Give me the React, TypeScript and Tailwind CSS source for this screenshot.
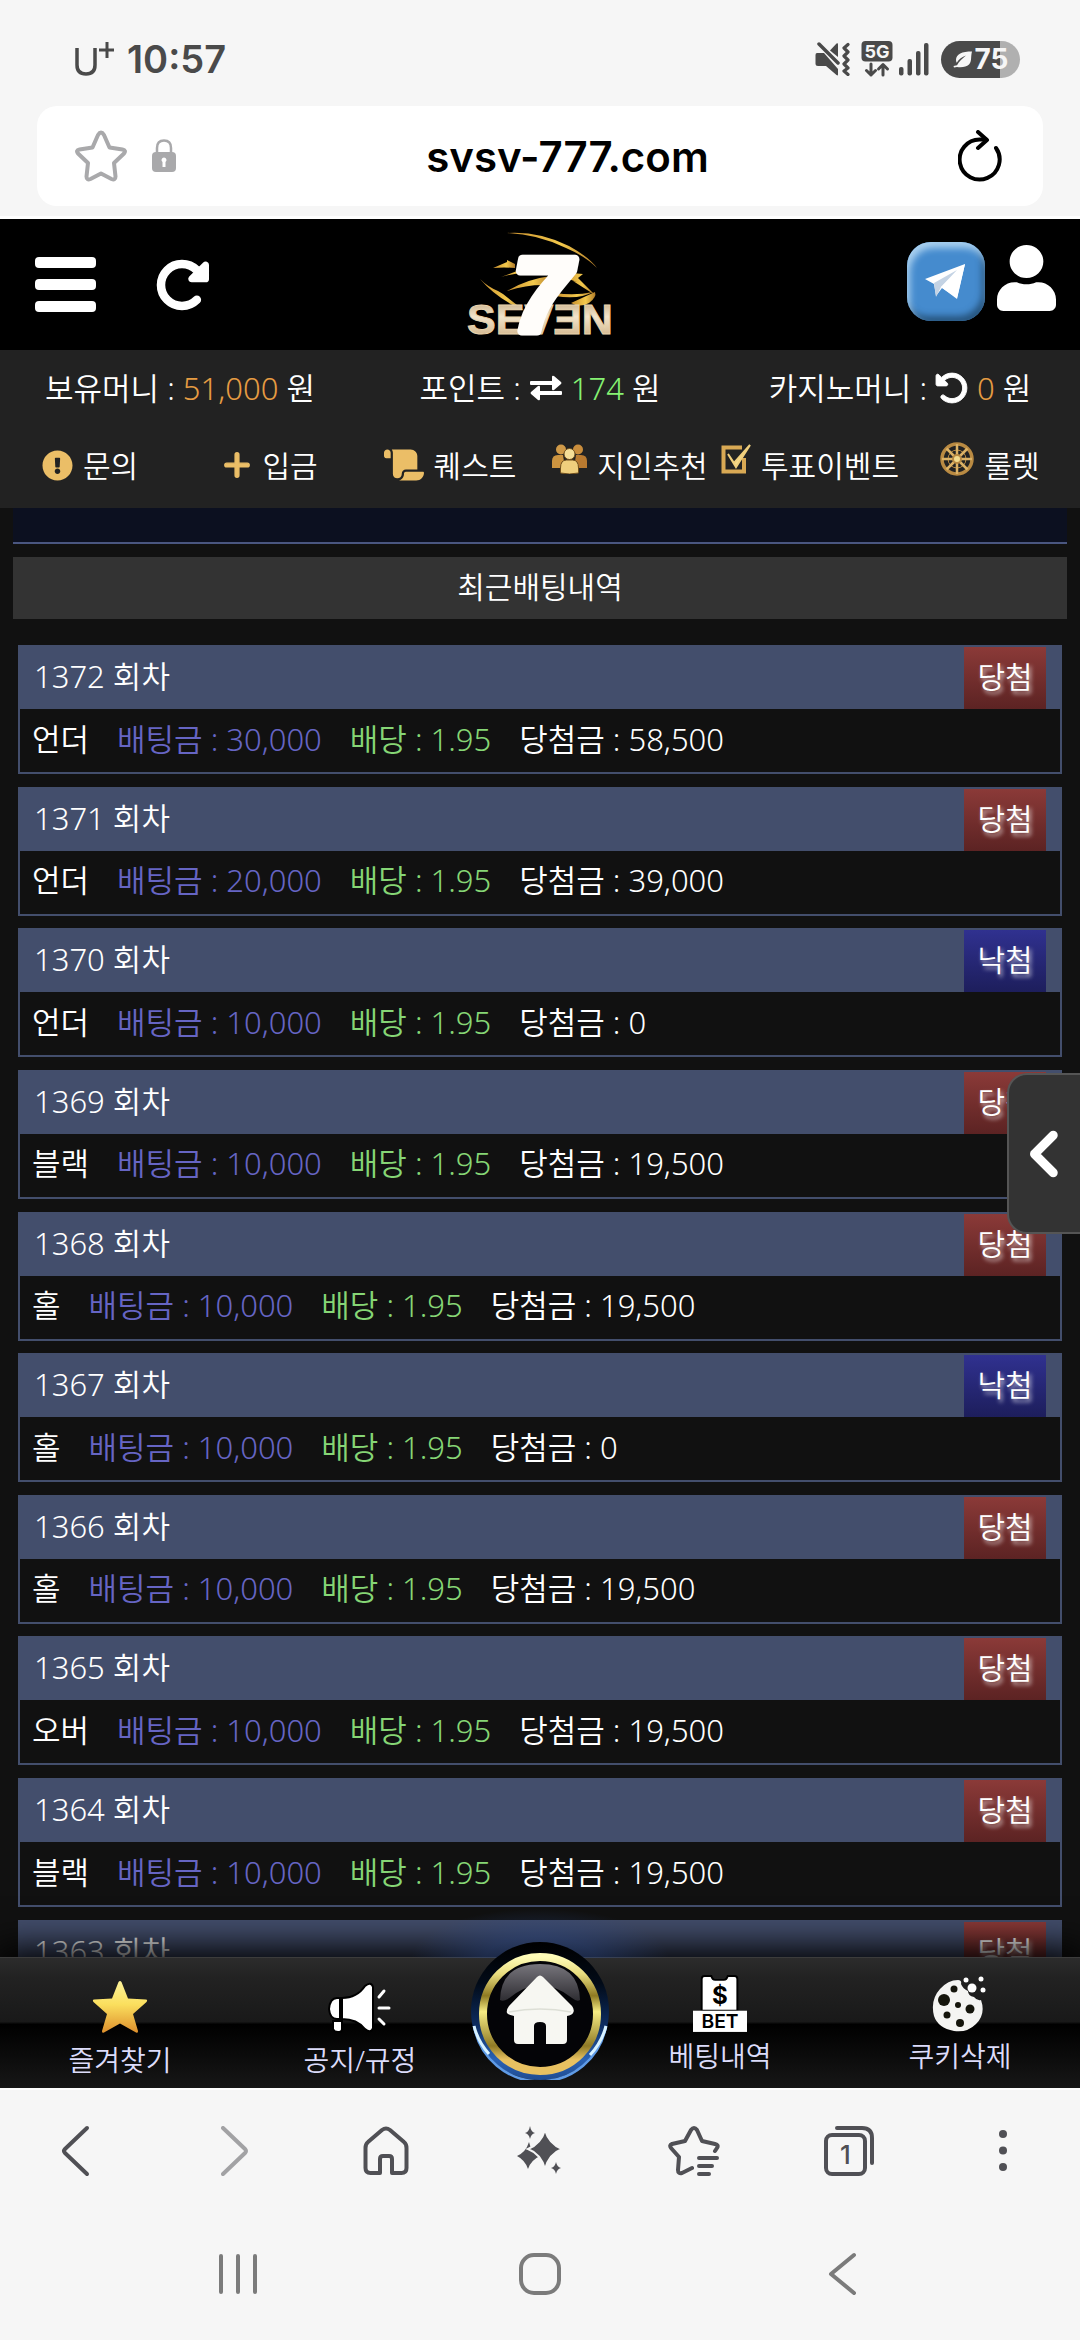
import type { ReactNode } from 'react';
import { FaChevronLeft, FaPlus, FaRotateLeft, FaRotateRight, FaScroll } from 'react-icons/fa6';
import { FaExclamationCircle, FaUser } from 'react-icons/fa';

interface BetRecord {
  round: number;
  pick: string;
  stake: string;
  odds: string;
  payout: string;
  won: boolean;
}

const BETS: BetRecord[] = [
  { round: 1372, pick: '언더', stake: '30,000', odds: '1.95', payout: '58,500', won: true },
  { round: 1371, pick: '언더', stake: '20,000', odds: '1.95', payout: '39,000', won: true },
  { round: 1370, pick: '언더', stake: '10,000', odds: '1.95', payout: '0', won: false },
  { round: 1369, pick: '블랙', stake: '10,000', odds: '1.95', payout: '19,500', won: true },
  { round: 1368, pick: '홀', stake: '10,000', odds: '1.95', payout: '19,500', won: true },
  { round: 1367, pick: '홀', stake: '10,000', odds: '1.95', payout: '0', won: false },
  { round: 1366, pick: '홀', stake: '10,000', odds: '1.95', payout: '19,500', won: true },
  { round: 1365, pick: '오버', stake: '10,000', odds: '1.95', payout: '19,500', won: true },
  { round: 1364, pick: '블랙', stake: '10,000', odds: '1.95', payout: '19,500', won: true },
  { round: 1363, pick: '홀', stake: '10,000', odds: '1.95', payout: '19,500', won: true },
];

/* ---------- Status bar ---------- */

function MuteVibrateIcon() {
  return (
    <svg width="36" height="34" viewBox="0 0 36 34" fill="#4a4a4a">
      <path d="M2 11h7L23 27v5.500q0 1.500-1.500.5L11 24H3q-2.500 0-2.500-2.500V13q0-2 1.500-2z" />
      <path d="M15 8.500 21.500 1.500q1.500-1 1.500.8V15z" />
      <path d="M4 2l19 19" stroke="#4a4a4a" strokeWidth="3.500" strokeLinecap="round" />
      <path
        d="M33 2.500 29 6l4 4-4 4 4 4-4 4 4 4-4 3 4 3.500"
        fill="none"
        stroke="#4a4a4a"
        strokeWidth="3.200"
        strokeLinecap="round"
        strokeLinejoin="round"
      />
    </svg>
  );
}

function NetworkIcon() {
  return (
    <svg width="32" height="36" viewBox="0 0 32 36">
      <rect x="0.500" y="0" width="31" height="20.500" rx="4" fill="#4a4a4a" />
      <text
        x="16"
        y="16.500"
        textAnchor="middle"
        fontFamily="Inter, sans-serif"
        fontSize="18"
        fontWeight="700"
        fill="#f6f6f6"
      >
        5G
      </text>
      <g fill="none" stroke="#4a4a4a" strokeWidth="3" strokeLinecap="round" strokeLinejoin="round">
        <path d="M10 23v11M5.500 29.500 10 34l4.500-4.500" />
        <path d="M22 34V23.500M17.500 28l4.500-4.500 4.500 4.500" />
      </g>
    </svg>
  );
}

function SignalIcon() {
  return (
    <svg width="30" height="34" viewBox="0 0 30 34" fill="#4a4a4a">
      <rect x="0" y="25" width="4.500" height="8.500" rx="2" />
      <rect x="8.500" y="17" width="4.500" height="16.500" rx="2" />
      <rect x="17" y="9" width="4.500" height="24.500" rx="2" />
      <rect x="25" y="1" width="4.500" height="32.500" rx="2" />
    </svg>
  );
}

function LeafIcon() {
  return (
    <svg width="20" height="17" viewBox="0 0 20 17" fill="#f6f6f6">
      <path d="M19 .5C9 .5 3 3 3 9q0 1.500.7 2.800C6 8 9 6 13 4.500 9.500 7.500 6 10.500 4 14.200L.5 15l.5 1.500 3-.5q8 1 12-2.500C19 10.500 17.500 6 19 .5z" />
    </svg>
  );
}

function StatusBar() {
  return (
    <div className="flex h-[106px] items-center justify-between pt-3 pr-[60px] pl-[75px] text-[#4a4a4a]">
      <div className="flex items-center gap-3 font-['Inter',sans-serif] leading-none">
        <svg width="40" height="36" viewBox="0 0 40 36" fill="none" stroke="#4a4a4a">
          <path d="M2 7v17q0 9 9 9t9-9V7" strokeWidth="3.500" />
          <path d="M32 1v16M24 9h15" strokeWidth="3" />
        </svg>
        <span className="text-[38px] font-semibold">10:57</span>
      </div>
      <div className="flex items-center gap-2.5">
        <MuteVibrateIcon />
        <NetworkIcon />
        <div className="mr-0.5 -ml-1">
          <SignalIcon />
        </div>
        <div className="flex h-[37px] w-[79px] items-center justify-center gap-0.5 rounded-full bg-[linear-gradient(90deg,#4a4a4a_75%,#b0b0b0_75%)] font-['Inter',sans-serif] text-[28px] leading-none font-bold text-[#f6f6f6]">
          <LeafIcon />
          75
        </div>
      </div>
    </div>
  );
}

function AddressBar() {
  return (
    <div className="mx-[37px] flex h-[100px] items-center rounded-[20px] bg-white pr-[41px] pl-[38px]">
      <button type="button" aria-label="북마크">
        <svg width="52" height="52" viewBox="0 0 52 52" fill="none" stroke="#a9a9ab" strokeWidth="4">
          <path
            d="M23 5q3-5 6 0l5.500 12.500 13 2q4 .8 1.500 4L39 33l1.500 13.500q0 4-4 2.500L26 43.500 15.500 49q-4 1.500-4-2.500L13 33 3 23.500q-2.500-3.200 1.500-4l13-2z"
            strokeLinejoin="round"
          />
        </svg>
      </button>
      <svg className="ml-6" width="26" height="34" viewBox="0 0 26 34">
        <path d="M6 16V9q0-7.500 7-7.500T20 9v7" fill="none" stroke="#a9a9ab" strokeWidth="2.500" />
        <rect x="1" y="13" width="24" height="20" rx="4" fill="#a9a9ab" />
        <path d="M13 18.500a2.500 2.500 0 0 1 1.500 4.500v5h-3v-5a2.500 2.500 0 0 1 1.500-4.500z" fill="#fff" />
      </svg>
      <input
        type="text"
        aria-label="주소"
        defaultValue="svsv-777.com"
        className="h-[60px] min-w-0 flex-1 bg-transparent text-center font-['Inter',sans-serif] text-[42px] font-semibold text-black outline-none"
      />
      <button type="button" aria-label="새로고침">
        <svg
          width="44"
          height="52"
          viewBox="0 0 44 52"
          fill="none"
          stroke="#000"
          strokeWidth="4"
          strokeLinecap="round"
          strokeLinejoin="round"
        >
          <path d="M38 18A20 20 0 1 1 22 9.500h6" />
          <path d="M20 2l9 8-9 8" />
        </svg>
      </button>
    </div>
  );
}

/* ---------- Site header ---------- */

function Logo() {
  return (
    <svg width="146" height="108" viewBox="0 0 146 108" role="img" aria-label="SEVEN">
      <defs>
        <linearGradient id="gold" x1="0" y1="0" x2="1" y2="0">
          <stop offset="0" stopColor="#c98f2e" />
          <stop offset="0.600" stopColor="#f3c94c" />
          <stop offset="1" stopColor="#b07a28" />
        </linearGradient>
        <linearGradient id="letters" x1="0" y1="0" x2="0" y2="1">
          <stop offset="0" stopColor="#b99a6c" />
          <stop offset="0.450" stopColor="#f2e4cc" />
          <stop offset="1" stopColor="#c9a878" />
        </linearGradient>
      </defs>
      <g fill="url(#gold)">
        <path d="M40 2q32-2 62 13 20 11 28 22-12-12-31-20Q70 3 40 2z" />
        <path d="M13 48q8 8 18 12l5 3q10 8 22 17Q30 68 13 48z" />
        <path d="M26 37l14-6v-2l8 4v4q-11-1-22 0z" />
        <path d="M34 46l16-6 12 1q-14 1-28 5z" />
        <path d="M40 60q20-12 44-15l-8 9q-18 0-36 6z" />
        <path d="M100 37l8-3-4 8 12 1-5 4 17 17-22-14 4 1-14-5z" />
        <path d="M104 72l24-11q2 5-6 11-9 5-18 0z" />
        <path d="M88 62q20 3 38-1-14 8-38 4z" />
      </g>
      <text
        x="73"
        y="103"
        textAnchor="middle"
        fontFamily="'Liberation Sans', Arial, sans-serif"
        fontSize="43"
        fontWeight="700"
        fill="url(#letters)"
        stroke="#e9d3ac"
        strokeWidth="1"
      >
        SEVƎN
      </text>
      <text
        x="75"
        y="100"
        textAnchor="middle"
        fontFamily="'Liberation Sans', Arial, sans-serif"
        fontSize="104"
        fontStyle="italic"
        fontWeight="700"
        fill="#fffdfa"
        stroke="#fffdfa"
        strokeWidth="9"
        strokeLinejoin="round"
      >
        7
      </text>
    </svg>
  );
}

function TelegramIcon() {
  return (
    <span className="flex h-[79px] w-[78px] items-center justify-center rounded-[24px] bg-[#458bce] shadow-[inset_3px_6px_7px_#a9d0ef,inset_-3px_-5px_6px_#27557f]">
      <svg width="46" height="40" viewBox="0 0 46 40">
        <path d="M2 17 42 2 34 36 19 26 13 34 11 22z" fill="#fff" />
        <path d="M11 21 34 8 18 25 13 35z" fill="#c4d3e4" />
        <path d="M42 2 18 25l16 12z" fill="#fff" />
      </svg>
    </span>
  );
}

function SiteHeader() {
  return (
    <header className="grid h-[131px] grid-cols-3 items-center bg-black px-6 text-white">
      <div className="flex items-center gap-[58px] pl-[11px]">
        <button type="button" aria-label="메뉴" className="flex flex-col gap-[11px]">
          <span className="h-[11px] w-[61px] rounded-sm bg-white" />
          <span className="h-[11px] w-[61px] rounded-sm bg-white" />
          <span className="h-[11px] w-[61px] rounded-sm bg-white" />
        </button>
        <button type="button" aria-label="다시 불러오기">
          <FaRotateRight size={56} strokeWidth={14} className="overflow-visible" />
        </button>
      </div>
      <a href="#home" className="justify-self-center">
        <Logo />
      </a>
      <div className="flex items-center justify-end gap-3 pb-1.5">
        <a href="#telegram" aria-label="텔레그램">
          <TelegramIcon />
        </a>
        <a href="#me" aria-label="내 정보" className="pb-2">
          <FaUser className="h-[66px] w-[59px]" preserveAspectRatio="none" />
        </a>
      </div>
    </header>
  );
}

/* ---------- Balances and quick menu ---------- */

function SwapIcon() {
  return (
    <svg width="34" height="26" viewBox="0 0 34 26" fill="#fff">
      <path d="M2 6h21V2q0-2 2-1l7 6q1 1 0 2l-7 6q-2 1-2-1v-4H2q-1 0-1-1V7q0-1 1-1z" />
      <path d="M32 20H11v4q0 2-2 1l-7-6q-1-1 0-2l7-6q2-1 2 1v4h21q1 0 1 1v2q0 1-1 1z" />
    </svg>
  );
}

function Balances() {
  return (
    <div className="grid h-[78px] grid-cols-3 items-center pb-0.5 text-[31px] whitespace-nowrap">
      <div className="text-center">
        보유머니 : <span className="text-[#e69c42]">51,000</span> 원
      </div>
      <div className="flex items-center justify-center gap-2">
        포인트 :
        <button type="button" aria-label="포인트 전환">
          <SwapIcon />
        </button>
        <span>
          <span className="text-[#86f273]">174</span> 원
        </span>
      </div>
      <div className="flex items-center justify-center gap-2">
        카지노머니 :
        <button type="button" aria-label="카지노머니 회수">
          <FaRotateLeft size={34} strokeWidth={14} className="overflow-visible" />
        </button>
        <span>
          <span className="text-[#e69c42]">0</span> 원
        </span>
      </div>
    </div>
  );
}

function GoldDefs() {
  return (
    <defs>
      <linearGradient id="brass" x1="0" y1="0" x2="1" y2="1">
        <stop offset="0" stopColor="#b67a2c" />
        <stop offset="0.450" stopColor="#f8e69a" />
        <stop offset="1" stopColor="#b27126" />
      </linearGradient>
    </defs>
  );
}

function PeopleIcon() {
  return (
    <svg width="35" height="30" viewBox="0 0 35 30" fill="url(#brass)">
      <GoldDefs />
      <circle cx="9" cy="5.500" r="5" fill="#d09a48" />
      <circle cx="26" cy="5.500" r="5" fill="#c98d3c" />
      <path d="M0 24V17q0-6 6-6h5l2 13z" fill="#cc9440" />
      <path d="M35 24V17q0-6-6-6h-5l-2 13z" fill="#b97a30" />
      <circle cx="17.500" cy="10" r="5.500" fill="#f6df98" stroke="#6e4d1c" />
      <path d="M8.500 29v-5q0-8 6-8h6q6 0 6 8v5q-9 2-18 0z" fill="#f0cf7d" stroke="#6e4d1c" />
    </svg>
  );
}

function VoteIcon() {
  return (
    <svg width="30" height="31" viewBox="0 0 30 31" fill="none">
      <path d="M21 3.500H2.500v24H23V14" stroke="#d9a954" strokeWidth="4" />
      <path d="M7 10l6 9 16-18-14 22z" fill="#f5dc8e" stroke="#f0cf7d" strokeWidth="2" />
    </svg>
  );
}

function RouletteIcon() {
  return (
    <svg width="34" height="34" viewBox="0 0 34 34" fill="none" stroke="#b98a42">
      <circle cx="17" cy="17" r="15" strokeWidth="3.500" />
      <circle cx="17" cy="17" r="9" strokeWidth="1" />
      <path d="M17 2v30M2 17h30M6.500 6.500l21 21M27.500 6.500l-21 21" stroke="#dcb266" strokeWidth="2.500" />
      <circle cx="17" cy="17" r="4" fill="#f3dc8f" strokeWidth="2" />
    </svg>
  );
}

interface QuickItemProps {
  icon: ReactNode;
  label: string;
}

function QuickItem({ icon, label }: QuickItemProps) {
  return (
    <button type="button" className="flex items-center justify-center gap-2.5 whitespace-nowrap">
      {icon}
      {label}
    </button>
  );
}

function QuickMenu() {
  return (
    <nav className="grid h-[80px] grid-cols-6 items-center pb-1.5 text-[30px]">
      <QuickItem icon={<FaExclamationCircle size={31} className="text-[#ebbe67]" />} label="문의" />
      <QuickItem icon={<FaPlus size={30} strokeWidth={24} className="text-[#ebbe67]" />} label="입금" />
      <QuickItem icon={<FaScroll className="h-[36px] w-[40px] text-[#ebbe67]" />} label="퀘스트" />
      <QuickItem icon={<span className="mb-3"><PeopleIcon /></span>} label="지인추천" />
      <QuickItem icon={<span className="mb-3"><VoteIcon /></span>} label="투표이벤트" />
      <QuickItem icon={<span className="mb-3"><RouletteIcon /></span>} label="룰렛" />
    </nav>
  );
}

/* ---------- Betting history ---------- */

function BetCard({ bet }: { bet: BetRecord }) {
  return (
    <article className="mx-[5px] mb-[1.2%] border-2 border-[#434e6c]">
      <div className="flex h-[62px] items-center justify-between bg-[#434e6c] px-3.5">
        <h3 className="pb-1">{bet.round} 회차</h3>
        <span
          className={`flex h-full w-[82px] items-center justify-center pb-0.5 text-[30px] [text-shadow:2px_3px_4px_rgba(255,255,255,0.7)] ${
            bet.won
              ? 'bg-linear-to-b from-[#8b3a38] to-[#5c2323]'
              : 'bg-linear-to-b from-[#303190] to-[#1d1e5c]'
          }`}
        >
          {bet.won ? '당첨' : '낙첨'}
        </span>
      </div>
      <p className="flex h-[63px] items-center gap-7 pb-1 pl-3">
        <span>{bet.pick}</span>
        <span className="text-[#6665c4]">배팅금 : {bet.stake}</span>
        <span className="text-[#86d675]">배당 : {bet.odds}</span>
        <span>당첨금 : {bet.payout}</span>
      </p>
    </article>
  );
}

function History() {
  return (
    <main className="min-h-0 flex-1 overflow-hidden bg-[#111] px-[13px]">
      <div className="h-9 border-b-2 border-[#4a5680] bg-[#0c1020]" />
      <h2 className="mt-[13px] mb-[26px] flex h-[62px] items-center justify-center bg-[#333] pb-1 text-[30px]">
        최근배팅내역
      </h2>
      <section className="text-[31px] leading-10">
        {BETS.map((bet) => (
          <BetCard key={bet.round} bet={bet} />
        ))}
      </section>
    </main>
  );
}

/* ---------- Site bottom navigation ---------- */

function GoldStar() {
  return (
    <svg width="56" height="54" viewBox="0 0 56 54">
      <defs>
        <linearGradient id="star" x1="0" y1="0" x2="0" y2="1">
          <stop offset="0" stopColor="#fdf39a" />
          <stop offset="0.450" stopColor="#fbdf5e" />
          <stop offset="1" stopColor="#dd8f2c" />
        </linearGradient>
      </defs>
      <path
        d="M26.500 2q1.500-2 3 0L36 18.500l18 1q2 .5.500 2.500L41 34l5 17q.3 2.500-2 1.500L28 43.500l-16 9q-2.300 1-2-1.500l5-17L1.500 22Q0 20 2 19.500l18-1z"
        fill="url(#star)"
      />
    </svg>
  );
}

function MegaphoneIcon() {
  return (
    <svg width="64" height="52" viewBox="0 0 64 52" fill="#fff" stroke="#000" strokeWidth="2">
      <path d="M12 16v21H9q-7 0-8-10 1-11 8-11z" />
      <path d="M14 16q15 0 23-12 6-5 8 1v41q-2 6-8 1-8-10-23-10z" />
      <path d="M5 39h9v8q0 3-4 3t-5-3z" />
      <g fill="none" stroke="#fff" strokeWidth="3" strokeLinecap="round">
        <path d="M51 15l5-6M51 26h10M51 37l5 5" />
      </g>
    </svg>
  );
}

function BetSlipIcon() {
  return (
    <svg width="54" height="58" viewBox="0 0 56 60">
      <path d="M12 2h7q1 4 4 4h9q3 0 4-4h7q3 0 3 3v33H9V5q0-3 3-3z" fill="#fff" stroke="#000" strokeWidth="2" />
      <rect x="0" y="38" width="56" height="22" fill="#fff" />
      <g fontFamily="Inter, sans-serif" fontWeight="700" textAnchor="middle" fill="#000">
        <text x="28" y="31" fontSize="25">$</text>
        <text x="28" y="56" fontSize="20" fontWeight="600">BET</text>
      </g>
    </svg>
  );
}

function CookieIcon() {
  return (
    <svg width="56" height="56" viewBox="0 0 56 56">
      <path
        d="M26 4q4 0 3 4 2 5 7 7 0 5 6 6 3 4 7 3 5 14-5 24-9 9-22 7Q6 52 2 40-2 24 8 13q8-9 18-9z"
        fill="#f4f4f2"
      />
      <g fill="#15150c">
        <circle cx="12" cy="24" r="6" />
        <circle cx="22" cy="13" r="3.500" />
        <circle cx="38" cy="33" r="4.500" />
        <circle cx="26" cy="29" r="3" />
        <circle cx="15" cy="39" r="3.500" />
        <circle cx="28" cy="47" r="4" />
      </g>
      <g fill="#fff">
        <circle cx="40" cy="12" r="4.500" />
        <circle cx="34" cy="4" r="2.500" />
        <circle cx="49" cy="3" r="2.500" />
        <circle cx="51" cy="14" r="2.500" />
      </g>
    </svg>
  );
}

function HomeBadge() {
  return (
    <svg className="shrink-0" width="138" height="138" viewBox="0 0 138 138">
      <defs>
        <linearGradient id="rim" x1="0" y1="0" x2="0" y2="1">
          <stop offset="0" stopColor="#000" />
          <stop offset="0.300" stopColor="#020b18" />
          <stop offset="0.600" stopColor="#0c2c60" />
          <stop offset="0.850" stopColor="#2a62b4" />
          <stop offset="1" stopColor="#1f4c92" />
        </linearGradient>
        <linearGradient id="ring" x1="0" y1="0" x2="0" y2="1">
          <stop offset="0" stopColor="#fffcb8" />
          <stop offset="0.150" stopColor="#e9dd7e" />
          <stop offset="0.340" stopColor="#8f7a22" />
          <stop offset="0.480" stopColor="#f6ec83" />
          <stop offset="0.780" stopColor="#8f7a26" />
          <stop offset="0.900" stopColor="#e8c161" />
          <stop offset="1" stopColor="#e8c161" />
        </linearGradient>
        <linearGradient id="gloss" x1="0" y1="0" x2="0" y2="1">
          <stop offset="0" stopColor="#77757c" />
          <stop offset="1" stopColor="#2e2d32" />
        </linearGradient>
      </defs>
      <circle cx="69" cy="69" r="69" fill="url(#rim)" />
      <path d="M3 84a67 67 0 0 0 132 0" fill="none" stroke="#5f9be6" strokeWidth="2.500" />
      <path d="M3 84a67 67 0 0 0 15 28M135 84a67 67 0 0 1-16 29" fill="none" stroke="#d8f2ff" strokeWidth="3" />
      <circle cx="69" cy="72" r="57" fill="#040407" stroke="url(#ring)" strokeWidth="8" />
      <path d="M29 58Q30 22 69 22t40 36q-3 2-8-2Q69 30 37 57q-5 3-8 1z" fill="url(#gloss)" />
      <path
        d="M66 35q3-3 6 0l29 29q3 4 1 7-1 2-6 3v24q0 4-4 4H75V84q0-4-6-4t-6 4v18H47q-4 0-4-4V74q-6-1-7-3-1-3 2-7z"
        fill="#f7f7f2"
      />
      <path d="M38 70q31-6 62 0" fill="none" stroke="#dddfd6" strokeWidth="1.500" />
    </svg>
  );
}

interface NavItemProps {
  icon: ReactNode;
  label: string;
  raised?: boolean;
}

function NavItem({ icon, label, raised }: NavItemProps) {
  return (
    <a
      href="#menu"
      className={`flex h-full flex-col items-center justify-end text-[28px] leading-8 whitespace-nowrap text-[#dcdcfa] ${
        raised ? 'gap-2 pb-4' : 'gap-2.5 pb-3'
      }`}
    >
      {icon}
      {label}
    </a>
  );
}

function SiteNav() {
  return (
    <nav className="relative grid h-[131px] grid-cols-[minmax(0,2fr)_minmax(0,2fr)_minmax(0,1fr)_minmax(0,2fr)_minmax(0,2fr)] border-t border-[#3c3c3c] bg-[linear-gradient(180deg,#2c2c2c_0%,#222_15%,#191919_49%,#000_51%,#171717_100%)] shadow-[0_-4px_34px_6px_#000]">
      {/* blue glow that rises above the bar behind the home badge */}
      <div className="pointer-events-none absolute bottom-full left-1/2 h-[50px] w-[260px] -translate-x-1/2 bg-[radial-gradient(ellipse_at_bottom,#2b4888_30%,transparent_70%)] opacity-40" />
      <NavItem icon={<GoldStar />} label="즐겨찾기" />
      <NavItem icon={<MegaphoneIcon />} label="공지/규정" />
      <a href="#home" aria-label="홈" className="relative -mt-4 flex items-start justify-center">
        <HomeBadge />
      </a>
      <NavItem icon={<BetSlipIcon />} label="베팅내역" raised />
      <NavItem icon={<CookieIcon />} label="쿠키삭제" raised />
    </nav>
  );
}

/* ---------- Browser toolbar and system keys ---------- */

function BrowserToolbar() {
  return (
    <div className="relative grid h-[123px] grid-cols-7 place-items-center border-t-2 border-white bg-[#f6f6f6] [&_svg]:h-[52px] [&_svg]:w-[52px] [&_svg]:fill-none [&_svg]:stroke-[#505055] [&_svg]:stroke-[4px]">
      <button type="button" aria-label="뒤로">
        <svg viewBox="0 0 52 52" strokeLinecap="round" strokeLinejoin="round">
          <path d="M36 3 14 24q-2 2 0 4l22 21" />
        </svg>
      </button>
      <button type="button" aria-label="앞으로" className="opacity-50">
        <svg viewBox="0 0 52 52" strokeLinecap="round" strokeLinejoin="round">
          <path d="M18 3l22 21q2 2 0 4L18 49" />
        </svg>
      </button>
      <button type="button" aria-label="홈 화면">
        <svg viewBox="0 0 52 52" strokeLinejoin="round">
          <path d="M22 5q4-3 8 0l14 12q2.500 2 2.500 6v20q0 5-5 5H32V34q0-3-3-3h-6q-3 0-3 3v14h-9.500q-5 0-5-5V23q0-4 2.500-6z" />
        </svg>
      </button>
      <button type="button" aria-label="AI 도우미">
        <svg viewBox="0 0 52 52">
          <g fill="#505055" stroke="none">
            <path d="M15 17q2 10 11 14-9 4-12 13-3-9-11-13 9-4 12-14z" />
            <path d="M31 5q4 14 17 19-13 5-17 20-4-15-17-20 13-5 17-19z" stroke="#f6f6f6" strokeWidth="2" />
            <path d="M16 1q1 6 5 7-4 1-5 6-1-5-5-6 4-1 5-7z" />
            <path d="M42 37q1 5 5 6-4 1-5 6-1-5-5-6 4-1 5-6z" />
          </g>
        </svg>
      </button>
      <button type="button" aria-label="북마크 목록">
        <svg viewBox="0 0 52 52" strokeLinecap="round" strokeLinejoin="round">
          <path d="M24 43 14 48q-4 1-4-3l1-13-8-9q-2-3 1-4l13-3 6-11q3-4 6 0l5 11 13 3q4 1 2 4l-2 3" />
          <path d="M31 33h18M31 41h13M31 49h10" />
        </svg>
      </button>
      <button type="button" aria-label="탭 1개">
        <svg viewBox="0 0 52 52" strokeLinecap="round">
          <rect x="3" y="10" width="39" height="39" rx="6" />
          <path d="M14 3h25q10 0 10 10v25" />
          <text
            x="22.500"
            y="39"
            textAnchor="middle"
            fontFamily="Inter, sans-serif"
            fontSize="26"
            fontWeight="500"
            fill="#505055"
            stroke="none"
          >
            1
          </text>
        </svg>
      </button>
      <button type="button" aria-label="더보기">
        <svg viewBox="0 0 52 52">
          <g fill="#505055" stroke="none">
            <circle cx="26" cy="9" r="4" />
            <circle cx="26" cy="25.500" r="4" />
            <circle cx="26" cy="42" r="4" />
          </g>
        </svg>
      </button>
    </div>
  );
}

function SystemKeys() {
  return (
    <div className="grid h-[129px] grid-cols-3 place-items-center px-[87px] pb-1 [&_svg]:fill-none [&_svg]:stroke-[#7b7b7b] [&_svg]:stroke-[4px]">
      <button type="button" aria-label="최근 앱">
        <svg width="44" height="44" viewBox="0 0 44 44" strokeLinecap="round">
          <path d="M5 4v36M22 4v36M39 4v36" />
        </svg>
      </button>
      <button type="button" aria-label="홈">
        <svg width="44" height="44" viewBox="0 0 44 44">
          <rect x="3" y="3" width="38" height="38" rx="13" />
        </svg>
      </button>
      <button type="button" aria-label="이전">
        <svg width="44" height="44" viewBox="0 0 44 44" strokeLinecap="round" strokeLinejoin="round">
          <path d="M34 3 11 22l23 19" />
        </svg>
      </button>
    </div>
  );
}

export default function App() {
  return (
    <div className="flex h-screen flex-col bg-[#f6f6f6] font-['Noto_Sans','Noto_Sans_CJK_KR',sans-serif] font-[350]">
      <StatusBar />
      <AddressBar />
      <div className="mt-2.5 shrink-0 border-t-[3px] border-white" />
      <SiteHeader />
      <div className="bg-[#222] text-white">
        <Balances />
        <QuickMenu />
      </div>
      <div className="flex min-h-0 flex-1 flex-col text-white">
        <History />
      </div>
      <SiteNav />
      <BrowserToolbar />
      <SystemKeys />
      <button
        type="button"
        aria-label="사이드 메뉴 열기"
        className="fixed top-[1073px] right-0 flex h-[161px] w-[73px] items-center justify-center rounded-l-[20px] border-2 border-r-0 border-[#555] bg-[#333] pl-1 text-white"
      >
        <FaChevronLeft size={50} strokeWidth={28} className="overflow-visible" />
      </button>
    </div>
  );
}
